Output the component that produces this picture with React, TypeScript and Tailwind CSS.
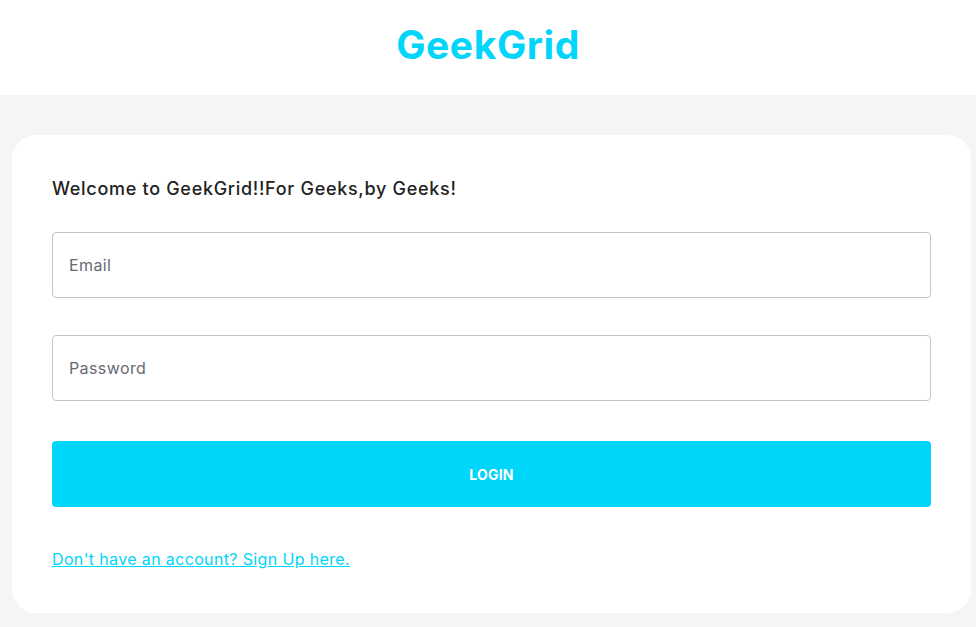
export default function App() {
  return (
    <div className="min-h-screen bg-[#f5f5f5] font-['Inter','Open_Sans',sans-serif]">
      <header className="flex h-[95px] items-center justify-center bg-white pb-1">
        <h1 className="text-[39px] font-bold tracking-[0.6px] text-[#00d5fa]">GeekGrid</h1>
      </header>

      <main className="pt-10">
        <div className="ml-3 mr-[5px] rounded-[24px] bg-white px-10 pb-[42px] pt-10">
          <p className="text-[18px] font-medium leading-[27px] tracking-[0.7px] text-[#222]">
            Welcome to GeekGrid!!For Geeks,by Geeks!
          </p>

          <input
            type="email"
            placeholder="Email"
            className="mt-[30px] block h-[66px] w-full rounded border border-[#c4c4c4] px-4 text-[16px] tracking-[0.4px] text-[#333] outline-none placeholder:text-[#666a72]"
          />
          <input
            type="password"
            placeholder="Password"
            className="mt-[37px] block h-[66px] w-full rounded border border-[#c4c4c4] px-4 text-[16px] tracking-[0.4px] text-[#333] outline-none placeholder:text-[#666a72]"
          />

          <button className="mt-10 block h-[66px] w-full rounded bg-[#00d5fa] text-[14px] font-bold tracking-[0.2px] text-white">
            LOGIN
          </button>

          <a href="#" className="mt-10 inline-block text-[16px] leading-6 tracking-[0.36px] text-[#00d5fa] underline">
            Don't have an account? Sign Up here.
          </a>
        </div>
      </main>
    </div>
  );
}
